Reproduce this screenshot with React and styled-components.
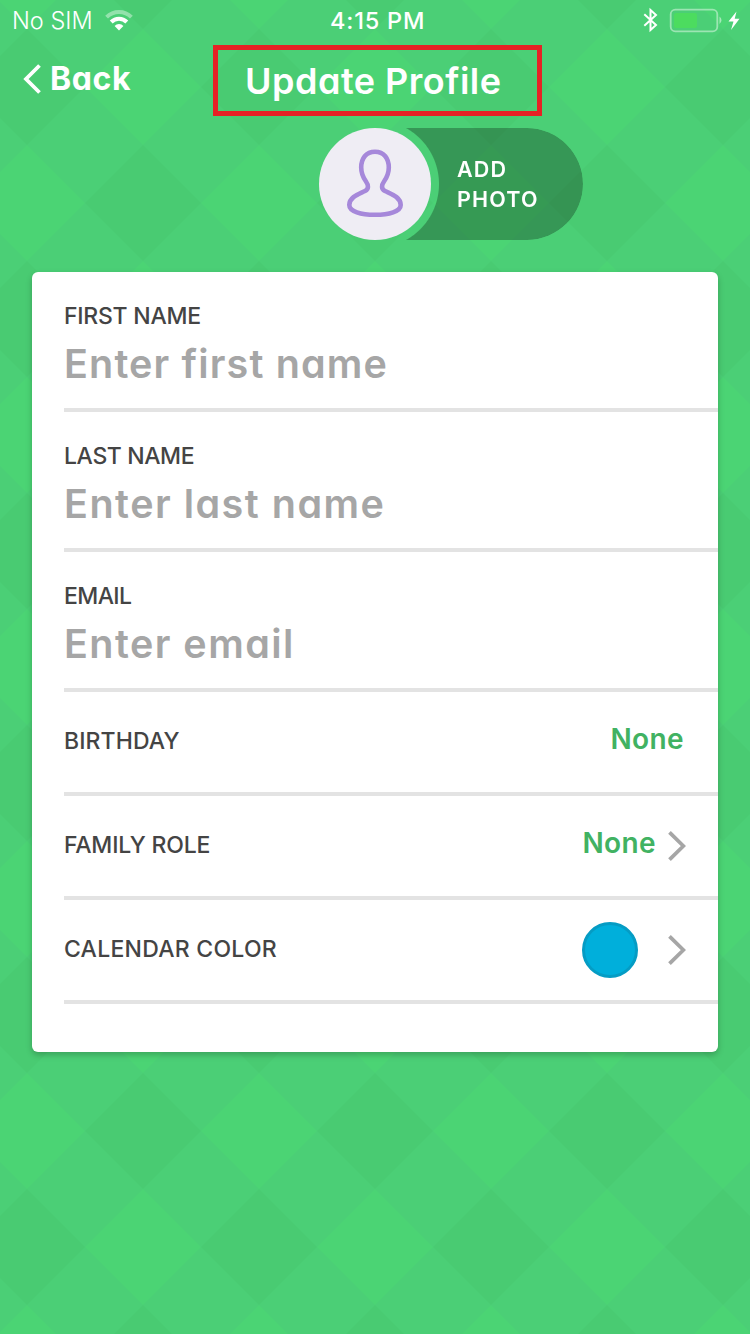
import React from 'react';
import styled, { createGlobalStyle } from 'styled-components';

const fields = [
  { label: 'FIRST NAME', labelSpacing: -0.25, placeholder: 'Enter first name', spacing: 1.15 },
  { label: 'LAST NAME', labelSpacing: -0.4, placeholder: 'Enter last name', spacing: 1.5 },
  { label: 'EMAIL', labelSpacing: -0.6, placeholder: 'Enter email', spacing: 1.45 },
];

function App() {
  return (
    <Page>
      <GlobalStyle />
      <Pattern />
      <StatusBar>
        <Carrier>No SIM</Carrier>
        <WifiIcon />
        <Clock>4:15 PM</Clock>
        <StatusIcons />
      </StatusBar>
      <Header>
        <BackButton>
          <svg width="20" height="32" viewBox="0 0 20 32" fill="none">
            <path d="M17.5 2.5 L4 16 L17.5 29.5" stroke="#fff" strokeWidth="3.8" />
          </svg>
          <BackText>Back</BackText>
        </BackButton>
        <TitleBox>
          <Title>Update Profile</Title>
        </TitleBox>
      </Header>
      <PhotoButton>
        <Avatar>
          <PersonIcon />
        </Avatar>
        <PhotoPill>ADD<br />PHOTO</PhotoPill>
      </PhotoButton>
      <Card>
        {fields.map(field => (
          <Field key={field.label}>
            <Label $spacing={field.labelSpacing}>{field.label}</Label>
            <Placeholder $spacing={field.spacing}>{field.placeholder}</Placeholder>
          </Field>
        ))}
        <Row>
          <Label $spacing={0.1}>BIRTHDAY</Label>
          <Value>None</Value>
        </Row>
        <Row>
          <Label $spacing={-0.2}>FAMILY ROLE</Label>
          <Value $beforeArrow>None</Value>
          <Chevron />
        </Row>
        <Row>
          <Label $spacing={0.25}>CALENDAR COLOR</Label>
          <Swatch />
          <Chevron />
        </Row>
      </Card>
    </Page>
  );
}

const Pattern = () => (
  <Backdrop>
    <defs>
      <pattern id="argyle" width="232" height="232" x="85" y="29" patternUnits="userSpaceOnUse">
        <rect width="232" height="232" fill="#4bcf76" />
        <path d="M58 0 L116 58 L58 116 L0 58 Z M174 116 L232 174 L174 232 L116 174 Z" fill="#4bd474" />
        <path d="M174 0 L232 58 L174 116 L116 58 Z M58 116 L116 174 L58 232 L0 174 Z" fill="#49cb72" />
      </pattern>
    </defs>
    <rect width="100%" height="100%" fill="url(#argyle)" />
  </Backdrop>
);

const WifiIcon = () => (
  <svg width="28" height="22" viewBox="0 0 28 22" fill="none" stroke="#fff" strokeWidth="4">
    <path d="M1.6 7.2 A17.6 17.6 0 0 1 26.4 7.2" strokeOpacity="0.4" />
    <path d="M6.2 12 A11 11 0 0 1 21.8 12" />
    <path d="M14 20.5 L9.6 16 A6 6 0 0 1 18.4 16 Z" fill="#fff" stroke="none" />
  </svg>
);

const StatusIcons = () => (
  <svg width="98" height="28" viewBox="0 0 98 28" fill="none">
    <path d="M1.3 7.3 L13 18 L7.5 23 V3 L13 8 L1.3 18.7" stroke="#fff" strokeWidth="2" />
    <rect x="27.7" y="2.7" width="46.6" height="21.6" rx="4.5" stroke="#fff" strokeOpacity="0.45" strokeWidth="1.8" />
    <rect x="31" y="6" width="23" height="15" rx="2" fill="#4cdc5f" />
    <path d="M76.5 9.5 Q80.5 13.2 76.5 17 Z" fill="#fff" fillOpacity="0.5" />
    <path d="M93.5 4.5 L85.5 14.5 H90.5 L88 23 L96.5 11.7 H91.7 Z" fill="#fff" />
  </svg>
);

const PersonIcon = () => (
  <svg width="60" height="72" viewBox="345 147.5 60 72" fill="none" stroke="#a688da" strokeWidth="4.6">
    <path d="M375 151.2 C384 151.2 388.8 158 388.8 167 C388.8 173.5 386.5 177.5 384 181 C381.5 184.5 381 188.5 385 190.5 C391 193.5 400.7 196.5 400.7 204.5 C400.7 211 389 214.3 375 214.3 C361 214.3 349.3 211 349.3 204.5 C349.3 196.5 359 193.5 365 190.5 C369 188.5 368.5 184.5 366 181 C363.5 177.5 361.2 173.5 361.2 167 C361.2 158 366 151.2 375 151.2 Z" />
  </svg>
);

const Chevron = () => (
  <svg width="18" height="32" viewBox="0 0 18 32" fill="none">
    <path d="M1.5 2.3 L15.4 16 L1.5 29.7" stroke="#a6a6a6" strokeWidth="3.8" />
  </svg>
);

const GlobalStyle = createGlobalStyle`
  body {
    margin: 0;
    background: #4bcf76;
    font-family: Inter, "Liberation Sans", sans-serif;
  }
`;

const Page = styled.div`
  position: relative;
  width: 750px;
  height: 1334px;
  overflow: hidden;
  isolation: isolate;
`;

const Backdrop = styled.svg`
  position: absolute;
  inset: 0;
  width: 100%;
  height: 100%;
  z-index: -1;
`;

const StatusBar = styled.div`
  display: grid;
  grid-template-columns: 93px 200px 1fr 98px;
  align-items: center;
  height: 40px;
  padding: 0 9px 0 12px;
  color: #fff;
  font-size: 23.5px;
  line-height: 42px;
`;

const Carrier = styled.span`
  font-weight: 350;
`;

const Clock = styled.span`
  padding-left: 25px;
  font-weight: 500;
  letter-spacing: 0.8px;
`;

const Header = styled.header`
  display: grid;
  grid-template-columns: 213px 329px;
  height: 88px;
  color: #fff;
`;

const BackButton = styled.div`
  display: flex;
  align-items: center;
  height: 78px;
  padding-left: 22px;
`;

const BackText = styled.span`
  padding-left: 8px;
  font-size: 32px;
  font-weight: 650;
  line-height: 38px;
  letter-spacing: 0.6px;
  font-feature-settings: "cv11";
`;

const TitleBox = styled.div`
  box-sizing: border-box;
  height: 71px;
  margin-top: 5px;
  border: 5px solid #e62225;
`;

const Title = styled.h1`
  margin: 0;
  padding-left: 27px;
  font-size: 36px;
  font-weight: 630;
  line-height: 63px;
  white-space: nowrap;
  letter-spacing: 0.5px;
  font-feature-settings: "cv11";
`;

const PhotoButton = styled.div`
  display: flex;
  padding-left: 319px;
  height: 144px;
`;

const Avatar = styled.div`
  display: flex;
  align-items: center;
  justify-content: center;
  width: 112px;
  height: 112px;
  border-radius: 50%;
  background: #efedf4;
  z-index: 1;
`;

const PhotoPill = styled.div`
  box-sizing: border-box;
  width: 208px;
  height: 112px;
  margin-left: -56px;
  padding: 26px 0 0 82px;
  border-radius: 0 56px 56px 0;
  background: rgba(0, 0, 0, 0.27);
  mask-image: radial-gradient(circle at 0 56px, transparent 63.5px, #000 64.5px);
  color: #fff;
  font-size: 21.5px;
  font-weight: 600;
  line-height: 30px;
  letter-spacing: 1.2px;
`;

const Card = styled.div`
  box-sizing: border-box;
  height: 780px;
  margin: 0 32px;
  padding-left: 32px;
  border-radius: 6px;
  background: #fff;
  box-shadow: 0 3px 6px rgba(0, 0, 0, 0.22);
`;

const Field = styled.div`
  box-sizing: border-box;
  height: 140px;
  padding-top: 28px;
  border-bottom: 4px solid #e3e3e3;
`;

const Row = styled.div`
  box-sizing: border-box;
  display: flex;
  align-items: center;
  height: 104px;
  padding-right: 32px;
  border-bottom: 4px solid #e3e3e3;
`;

const Label = styled.div`
  flex: 1;
  color: #444;
  font-size: 23px;
  line-height: 32px;
  font-weight: 450;
  letter-spacing: ${props => props.$spacing}px;

  ${Row} & {
    padding-bottom: 2px;
  }
`;

const Placeholder = styled.div`
  margin-top: 8px;
  color: #a6a6a6;
  font-size: 39.5px;
  font-weight: 600;
  line-height: 48px;
  letter-spacing: ${props => props.$spacing}px;
  font-feature-settings: "cv11";
`;

const Value = styled.div`
  margin-right: ${props => (props.$beforeArrow ? '12px' : '2px')};
  padding-bottom: 6px;
  color: #41b262;
  font-size: 28px;
  font-weight: 600;
  letter-spacing: 0.4px;
`;

const Swatch = styled.div`
  box-sizing: border-box;
  width: 56px;
  height: 56px;
  margin-right: 30px;
  border: 3px solid #059cc4;
  border-radius: 50%;
  background: #00afdb;
`;

export default App;
